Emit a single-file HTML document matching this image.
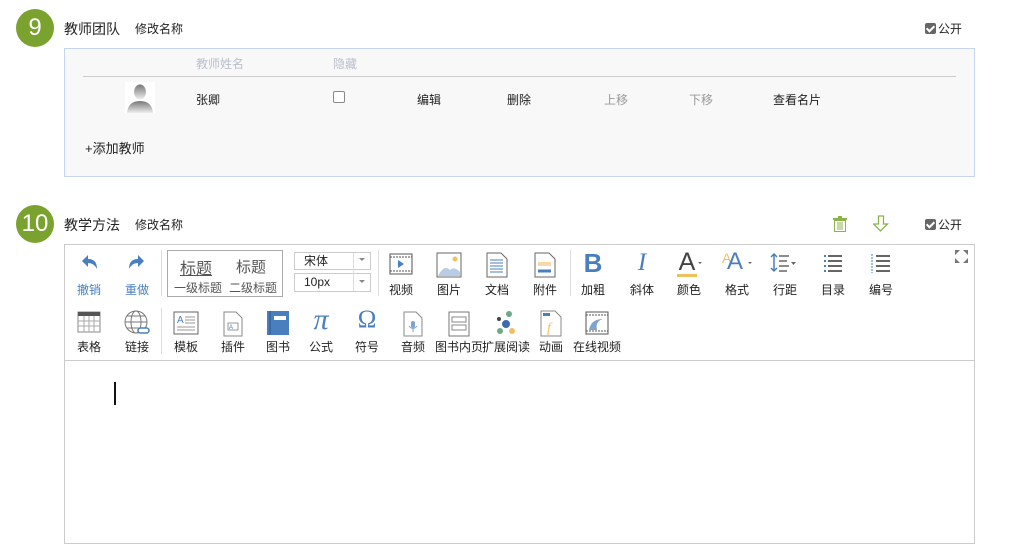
<!DOCTYPE html>
<html><head><meta charset="utf-8"><style>
*{margin:0;padding:0;box-sizing:border-box}
body{width:1012px;height:540px;background:#fff;position:relative;overflow:hidden;font-family:"Liberation Sans","Noto Sans CJK SC",sans-serif;color:#222;font-size:12px}
.a{position:absolute;white-space:nowrap}
.num{position:absolute;width:38px;height:38px;border-radius:50%;background:#7aa22f;color:#fff;font-size:24px;text-align:center;line-height:38px}
.t{font-size:14px}
.chk{display:inline-block;width:11px;height:11px;background:#666;border-radius:2px;vertical-align:-1px;margin-right:2px;position:relative}
.chk:after{content:"";position:absolute;left:3px;top:1px;width:3px;height:6px;border:solid #fff;border-width:0 2px 2px 0;transform:rotate(45deg)}
.lbl{position:absolute;font-size:12px;transform:translateX(-50%);white-space:nowrap}
.ic{position:absolute;transform:translateX(-50%)}
.sep{position:absolute;width:1px;background:#ddd}
</style></head><body>
<div class="num" style="left:16px;top:9px">9</div>
<div class="a t" style="left:64px;top:19px">教师团队</div>
<div class="a" style="left:135px;top:20px">修改名称</div>
<div class="a" style="left:925px;top:20px"><span class="chk"></span>公开</div>

<div class="a" style="left:64px;top:48px;width:911px;height:129px;background:#f8f8f8;border:1px solid #c5d5ee"></div>
<div class="a" style="left:196px;top:55px;color:#b8bfcc">教师姓名</div>
<div class="a" style="left:333px;top:55px;color:#b8bfcc">隐藏</div>
<div class="a" style="left:83px;top:76px;width:873px;height:1px;background:#ccc"></div>
<div class="a" style="left:125px;top:82px;width:30px;height:31px;background:#fff;overflow:hidden">
<svg width="30" height="31"><defs><linearGradient id="g" x1="0" y1="0" x2="0" y2="1"><stop offset="0" stop-color="#777"/><stop offset="1" stop-color="#eee"/></linearGradient></defs><ellipse cx="15" cy="10" rx="6" ry="7.5" fill="url(#g)"/><path d="M2 31 Q3 19 15 19 Q27 19 28 31Z" fill="url(#g)"/></svg></div>
<div class="a" style="left:196px;top:91px">张卿</div>
<div class="a" style="left:333px;top:91px;width:12px;height:12px;border:1px solid #888;border-radius:2px;background:#fff"></div>
<div class="a" style="left:417px;top:91px">编辑</div>
<div class="a" style="left:507px;top:91px">删除</div>
<div class="a" style="left:604px;top:91px;color:#999">上移</div>
<div class="a" style="left:689px;top:91px;color:#999">下移</div>
<div class="a" style="left:773px;top:91px">查看名片</div>
<div class="a" style="left:85px;top:138px;font-size:13px">+添加教师</div>

<div class="num" style="left:16px;top:205px">10</div>
<div class="a t" style="left:64px;top:215px">教学方法</div>
<div class="a" style="left:135px;top:216px">修改名称</div>
<svg class="a" style="left:832px;top:215px" width="16" height="18"><rect x="1" y="3" width="14" height="2" fill="#8bb44a"/><rect x="6" y="1" width="4" height="2" fill="#8bb44a"/><rect x="2.5" y="5.5" width="11" height="11" fill="none" stroke="#8bb44a"/><path d="M6 7v8M8 7v8M10 7v8" stroke="#8bb44a"/></svg>
<svg class="a" style="left:873px;top:215px" width="16" height="18"><path d="M5.5 1h5v8h4l-7 7-7-7h5z" fill="none" stroke="#8bb44a" stroke-width="1.3"/></svg>
<div class="a" style="left:925px;top:216px"><span class="chk"></span>公开</div>

<div class="a" style="left:64px;top:244px;width:911px;height:300px;border:1px solid #ccc"></div>
<div class="a" style="left:65px;top:360px;width:909px;height:1px;background:#ccc"></div>
<svg class="a" style="left:955px;top:250px" width="13" height="13" fill="#777"><path d="M0 0h5L0 5zM13 0v5L8 0zM0 13V8l5 5zM13 13H8l5-5z"/></svg>

<!-- row1 -->
<svg class="ic" style="left:89px;top:253px" width="20" height="20"><path d="M3 8 L9 2 V6 Q18 6 18 16 Q15 10 9 10 V14Z" fill="#4a7fbf"/></svg>
<div class="lbl" style="left:89px;top:281px;color:#4a7fbf">撤销</div>
<svg class="ic" style="left:137px;top:253px" width="20" height="20"><path d="M17 8 L11 2 V6 Q2 6 2 16 Q5 10 11 10 V14Z" fill="#4a7fbf"/></svg>
<div class="lbl" style="left:137px;top:281px;color:#4a7fbf">重做</div>
<div class="sep" style="left:161px;top:250px;height:46px"></div>
<div class="a" style="left:167px;top:250px;width:116px;height:47px;border:1px solid #aaa"></div>
<div class="a" style="left:180px;top:255px;font-size:16px;color:#555;text-decoration:underline">标题</div>
<div class="a" style="left:236px;top:256px;font-size:15px;color:#555">标题</div>
<div class="a" style="left:174px;top:279px;color:#555">一级标题</div>
<div class="a" style="left:229px;top:279px;color:#555">二级标题</div>
<div class="a" style="left:294px;top:252px;width:77px;height:18px;border:1px solid #ccc;background:#fff;padding-left:9px;line-height:16px">宋体</div>
<div class="a" style="left:294px;top:273px;width:77px;height:19px;border:1px solid #ccc;background:#fff;padding-left:9px;line-height:17px">10px</div>
<div class="a" style="left:353px;top:253px;width:1px;height:38px;background:#ddd"></div>
<div class="a" style="left:359px;top:258px;border:3px solid transparent;border-top-color:#888"></div>
<div class="a" style="left:359px;top:280px;border:3px solid transparent;border-top-color:#888"></div>
<div class="sep" style="left:378px;top:250px;height:46px"></div>

<svg class="ic" style="left:401px;top:252px" width="24" height="24"><rect x="1" y="2" width="22" height="20" fill="#fff" stroke="#555"/><path d="M1 5h22M1 19h22" stroke="#555" stroke-dasharray="2 1"/><path d="M9 8l6 4-6 4z" fill="#4a7fbf"/></svg>
<div class="lbl" style="left:401px;top:281px">视频</div>
<svg class="ic" style="left:449px;top:252px" width="26" height="26"><rect x="1" y="1" width="24" height="24" fill="#fff" stroke="#666"/><path d="M2 24 Q8 12 14 18 Q18 14 24 20V24Z" fill="#b7cde6"/><circle cx="19" cy="7" r="2.5" fill="#f0c060"/></svg>
<div class="lbl" style="left:449px;top:281px">图片</div>
<svg class="ic" style="left:497px;top:252px" width="22" height="26"><path d="M1 1h14l6 6v18H1z" fill="#fff" stroke="#666"/><path d="M4 8h13M4 11h13M4 14h13M4 17h13M4 20h13" stroke="#4a7fbf"/></svg>
<div class="lbl" style="left:497px;top:281px">文档</div>
<svg class="ic" style="left:545px;top:252px" width="22" height="26"><path d="M1 1h14l6 6v18H1z" fill="#fff" stroke="#666"/><rect x="4" y="10" width="13" height="4" fill="#f5d9a6"/><path d="M4 19h13" stroke="#4a7fbf" stroke-width="3"/></svg>
<div class="lbl" style="left:545px;top:281px">附件</div>
<div class="sep" style="left:570px;top:250px;height:46px"></div>
<div class="lbl" style="left:593px;top:248px;font-size:26px;font-weight:bold;color:#4a7fbf;font-family:'Liberation Sans',sans-serif">B</div>
<div class="lbl" style="left:593px;top:281px">加粗</div>
<div class="lbl" style="left:642px;top:249px;font-size:25px;font-style:italic;color:#4a7fbf;font-family:'Liberation Serif',serif">I</div>
<div class="lbl" style="left:642px;top:281px">斜体</div>
<div class="lbl" style="left:687px;top:248px;font-size:25px;color:#444">A</div>
<div class="a" style="left:677px;top:274px;width:20px;height:3px;background:#f0c060"></div>
<div class="a" style="left:698px;top:262px;border:2.5px solid transparent;border-top-color:#666"></div>
<div class="lbl" style="left:689px;top:281px">颜色</div>
<div class="a" style="left:722px;top:250px;font-size:14px;color:#f0c060">A</div>
<div class="a" style="left:727px;top:248px;font-size:24px;color:#4a7fbf">A</div>
<div class="a" style="left:748px;top:262px;border:2.5px solid transparent;border-top-color:#666"></div>
<div class="lbl" style="left:737px;top:281px">格式</div>
<svg class="ic" style="left:783px;top:252px" width="28" height="22"><path d="M5 2v17M2 5l3-3 3 3M2 16l3 3 3-3" stroke="#4a7fbf" fill="none" stroke-width="1.5"/><path d="M10 4h10M10 9h8M10 14h10M10 19h8" stroke="#666" stroke-width="1.5"/><path d="M22 10h5l-2.5 3z" fill="#666"/></svg>
<div class="lbl" style="left:785px;top:281px">行距</div>
<svg class="ic" style="left:833px;top:252px" width="22" height="22"><path d="M2 4h2M2 9h2M2 14h2M2 19h2" stroke="#4a7fbf" stroke-width="2"/><path d="M6 4h14M6 9h14M6 14h14M6 19h14" stroke="#666" stroke-width="2"/></svg>
<div class="lbl" style="left:833px;top:281px">目录</div>
<svg class="ic" style="left:881px;top:252px" width="22" height="22"><path d="M2 2v19" stroke="#4a7fbf" stroke-dasharray="2 1"/><path d="M6 4h14M6 9h14M6 14h14M6 19h14" stroke="#666" stroke-width="2"/></svg>
<div class="lbl" style="left:881px;top:281px">编号</div>

<!-- row2 -->
<svg class="ic" style="left:89px;top:311px" width="24" height="22"><rect x="1" y="1" width="22" height="20" fill="#fff" stroke="#888"/><rect x="1" y="1" width="22" height="4" fill="#555"/><path d="M1 10h22M1 15h22M7 5v16M12 5v16M17 5v16" stroke="#aaa"/></svg>
<div class="lbl" style="left:89px;top:338px">表格</div>
<svg class="ic" style="left:137px;top:310px" width="28" height="26"><circle cx="13" cy="12" r="11" fill="none" stroke="#777"/><ellipse cx="13" cy="12" rx="5" ry="11" fill="none" stroke="#777"/><path d="M2 12h22M4 6h18M4 18h18" stroke="#777"/><rect x="15" y="18" width="11" height="5" rx="2.5" fill="#fff" stroke="#4a7fbf" stroke-width="1.5"/></svg>
<div class="lbl" style="left:137px;top:338px">链接</div>
<div class="sep" style="left:161px;top:308px;height:46px"></div>
<svg class="ic" style="left:186px;top:311px" width="26" height="24"><rect x="1" y="1" width="24" height="22" fill="#fff" stroke="#666"/><text x="4" y="12" font-size="10" fill="#4a7fbf" font-family="Liberation Sans">A</text><path d="M12 6h10M12 9h10M12 12h10M4 16h18M4 19h18" stroke="#999"/></svg>
<div class="lbl" style="left:186px;top:338px">模板</div>
<svg class="ic" style="left:233px;top:311px" width="20" height="26"><path d="M1 1h12l6 6v18H1z" fill="#fff" stroke="#888"/><rect x="5" y="12" width="10" height="7" fill="none" stroke="#999"/><text x="6" y="18" font-size="6" fill="#4a7fbf">A</text></svg>
<div class="lbl" style="left:233px;top:338px">插件</div>
<svg class="ic" style="left:278px;top:310px" width="24" height="26"><rect x="1" y="1" width="22" height="24" fill="#4a7fbf"/><rect x="3" y="1" width="2" height="24" fill="#3a6aa5"/><rect x="8" y="6" width="12" height="4" fill="#fff"/></svg>
<div class="lbl" style="left:278px;top:338px">图书</div>
<div class="lbl" style="left:321px;top:303px;font-size:30px;color:#4a7fbf;font-family:'Liberation Serif',serif;font-style:italic">π</div>
<div class="lbl" style="left:321px;top:338px">公式</div>
<div class="lbl" style="left:367px;top:306px;font-size:25px;color:#4a7fbf;font-family:'Liberation Serif',serif">Ω</div>
<div class="lbl" style="left:367px;top:338px">符号</div>
<svg class="ic" style="left:413px;top:311px" width="20" height="26"><path d="M1 1h12l6 6v18H1z" fill="#fff" stroke="#888"/><rect x="8" y="10" width="4" height="7" rx="2" fill="#7ea3d1"/><path d="M6 15q4 5 8 0M10 18v3" stroke="#7ea3d1" fill="none"/></svg>
<div class="lbl" style="left:413px;top:338px">音频</div>
<svg class="ic" style="left:459px;top:311px" width="22" height="26"><rect x="1" y="1" width="20" height="24" fill="#fff" stroke="#777"/><rect x="4" y="6" width="14" height="5" fill="none" stroke="#888"/><rect x="4" y="14" width="14" height="5" fill="none" stroke="#888"/></svg>
<div class="lbl" style="left:459px;top:338px">图书内页</div>
<svg class="ic" style="left:506px;top:310px" width="24" height="26"><circle cx="15" cy="4" r="3" fill="#6aaa8a"/><circle cx="5" cy="9" r="2" fill="#444"/><circle cx="12" cy="14" r="4" fill="#3a6ab0"/><circle cx="6" cy="21" r="3" fill="#6aaa8a"/><circle cx="18" cy="21" r="3" fill="#f0c060"/></svg>
<div class="lbl" style="left:506px;top:338px">扩展阅读</div>
<svg class="ic" style="left:551px;top:310px" width="22" height="27"><path d="M1 1h14l6 6v19H1z" fill="#fff" stroke="#888"/><rect x="3" y="3" width="7" height="3" fill="#4a7fbf"/><text x="7" y="22" font-size="14" font-style="italic" fill="#f0c060" font-family="Liberation Serif">f</text></svg>
<div class="lbl" style="left:551px;top:338px">动画</div>
<svg class="ic" style="left:597px;top:311px" width="24" height="24"><rect x="1" y="1" width="22" height="22" fill="#fff" stroke="#555"/><path d="M1 4h22M1 20h22" stroke="#555" stroke-dasharray="2 1"/><path d="M4 19Q6 8 18 8Q10 10 12 19Z" fill="#7ea3d1"/></svg>
<div class="lbl" style="left:597px;top:338px">在线视频</div>

<div class="a" style="left:114px;top:382px;width:2px;height:23px;background:#111"></div>
</body></html>
